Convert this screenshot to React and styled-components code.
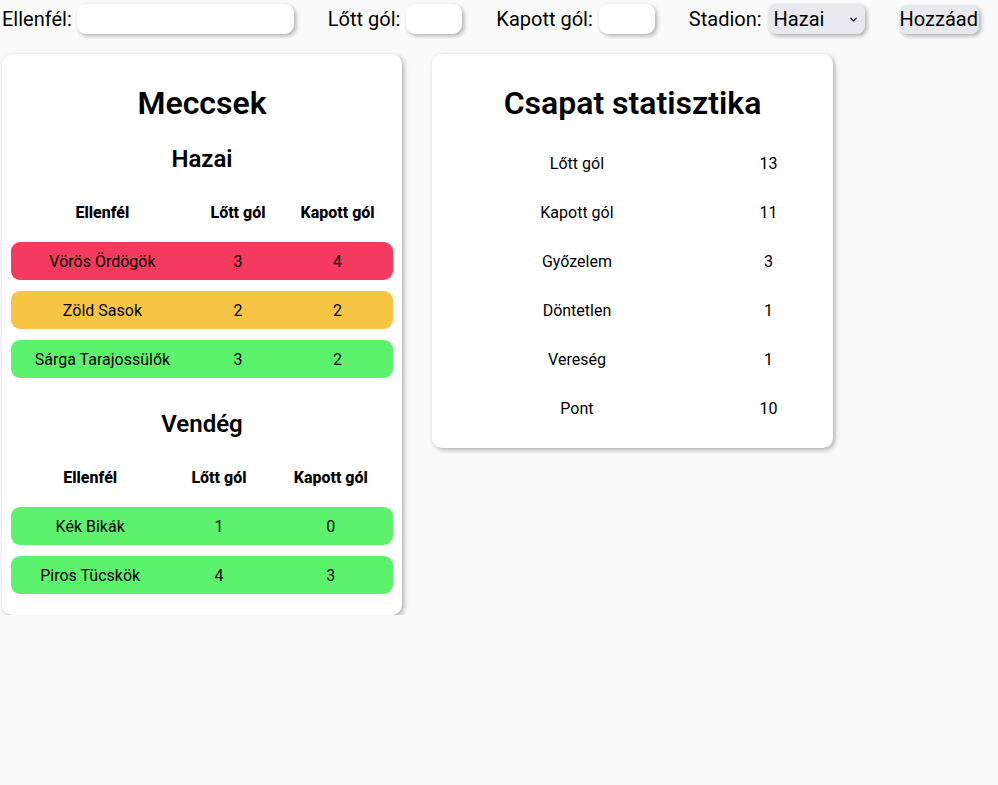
import React from 'react';
import styled, { createGlobalStyle } from 'styled-components';
import { ChevronDown } from 'lucide-react';

const GlobalStyle = createGlobalStyle`
  body {
    margin: 0;
    background: #fafafa;
    font-family: Roboto, "Liberation Sans", sans-serif;
    color: #000;
  }
`;

const hazai = [
  { name: 'Vörös Ördögök', scored: 3, conceded: 4 },
  { name: 'Zöld Sasok', scored: 2, conceded: 2 },
  { name: 'Sárga Tarajossülők', scored: 3, conceded: 2 },
];

const vendeg = [
  { name: 'Kék Bikák', scored: 1, conceded: 0 },
  { name: 'Piros Tücskök', scored: 4, conceded: 3 },
];

const stats = [
  ['Lőtt gól', 13],
  ['Kapott gól', 11],
  ['Győzelem', 3],
  ['Döntetlen', 1],
  ['Vereség', 1],
  ['Pont', 10],
];

const resultColor = (m) => {
  if (m.scored > m.conceded) return '#5cf26d';
  if (m.scored < m.conceded) return '#f43b5f';
  return '#f7c544';
};

const Form = () => (
  <Toolbar>
    <Field>
      Ellenfél:
      <Input type='text' $w={217} />
    </Field>
    <Field>
      Lőtt gól:
      <Input type='text' $w={56} />
    </Field>
    <Field>
      Kapott gól:
      <Input type='text' $w={56} />
    </Field>
    <Field>
      Stadion:
      <SelectWrap>
        <Select defaultValue='hazai'>
          <option value='hazai'>Hazai</option>
          <option value='vendeg'>Vendég</option>
        </Select>
        <Chevron size={11} strokeWidth={2.5} />
      </SelectWrap>
    </Field>
    <Button>Hozzáad</Button>
  </Toolbar>
);

const MatchTable = ({ matches }) => (
  <Table>
    <thead>
      <tr>
        <th>Ellenfél</th>
        <th>Lőtt gól</th>
        <th>Kapott gól</th>
      </tr>
    </thead>
    <tbody>
      {matches.map((m) => (
        <MatchRow key={m.name} $bg={resultColor(m)}>
          <td>{m.name}</td>
          <td>{m.scored}</td>
          <td>{m.conceded}</td>
        </MatchRow>
      ))}
    </tbody>
  </Table>
);

const App = () => {
  return (
    <>
      <GlobalStyle />
      <Form />
      <Main>
        <Card>
          <Title>Meccsek</Title>
          <SubTitle>Hazai</SubTitle>
          <MatchTable matches={hazai} />
          <SubTitle>Vendég</SubTitle>
          <MatchTable matches={vendeg} />
        </Card>
        <Card>
          <Title>Csapat statisztika</Title>
          <StatTable>
            <tbody>
              {stats.map(([label, value]) => (
                <tr key={label}>
                  <td>{label}</td>
                  <td>{value}</td>
                </tr>
              ))}
            </tbody>
          </StatTable>
        </Card>
      </Main>
    </>
  );
};

const Toolbar = styled.div`
  display: flex;
  align-items: center;
  gap: 34px;
  padding: 3px 2px 0;
  height: 32px;
  font-size: 20px;
`;

const Field = styled.label`
  display: flex;
  align-items: center;
  gap: 5px;
  white-space: nowrap;

  & + & {
    gap: 6px;
  }
`;

const Input = styled.input`
  width: ${(p) => p.$w}px;
  height: 30px;
  box-sizing: border-box;
  border: none;
  border-radius: 9px;
  background: #fff;
  box-shadow: 2px 2px 4px rgba(0, 0, 0, 0.3);
  font: inherit;
  padding: 0 8px;
  outline: none;
`;

const SelectWrap = styled.span`
  position: relative;
  display: inline-flex;
`;

const Select = styled.select`
  appearance: none;
  width: 97px;
  height: 30px;
  border: none;
  border-radius: 8px;
  background: #e9e9ed;
  box-shadow: 2px 2px 4px rgba(0, 0, 0, 0.3);
  font: inherit;
  color: #000;
  padding: 0 6px;
`;

const Chevron = styled(ChevronDown)`
  position: absolute;
  right: 6px;
  top: 10px;
  pointer-events: none;
`;

const Button = styled.button`
  height: 29px;
  border: none;
  border-radius: 8px;
  background: #e9e9ed;
  box-shadow: 2px 2px 4px rgba(0, 0, 0, 0.3);
  font: inherit;
  color: #000;
  padding: 0 1px;
`;

const Main = styled.main`
  display: flex;
  align-items: flex-start;
  gap: 30px;
  padding: 19px 2px 0;
`;

const Card = styled.section`
  width: 400px;
  box-sizing: border-box;
  padding: 9px 9px 10px;
  background: #fff;
  border-radius: 10px;
  box-shadow: 2px 2px 5px rgba(0, 0, 0, 0.3);
  text-align: center;

  & + & {
    width: 401px;
  }
`;

const Title = styled.h1`
  font-size: 32px;
  font-weight: 600;
  margin: 21px 0 11px;
`;

const SubTitle = styled.h2`
  font-size: 24px;
  font-weight: 600;
  margin: 21px 0 9px;

  ${Title} + & {
    margin-top: 23px;
  }
`;

const Table = styled.table`
  width: 100%;
  border-collapse: separate;
  border-spacing: 0 11px;
  font-size: 16px;

  th,
  td {
    height: 38px;
    padding: 0 10px;
    box-sizing: border-box;
  }

  th {
    font-weight: 800;
  }
`;

const MatchRow = styled.tr`
  td {
    background: ${(p) => p.$bg};
  }
  td:first-child {
    border-radius: 9px 0 0 9px;
  }
  td:last-child {
    border-radius: 0 9px 9px 0;
  }
`;

const StatTable = styled(Table)`
  td:first-child {
    width: 71%;
  }
`;

export default App;
